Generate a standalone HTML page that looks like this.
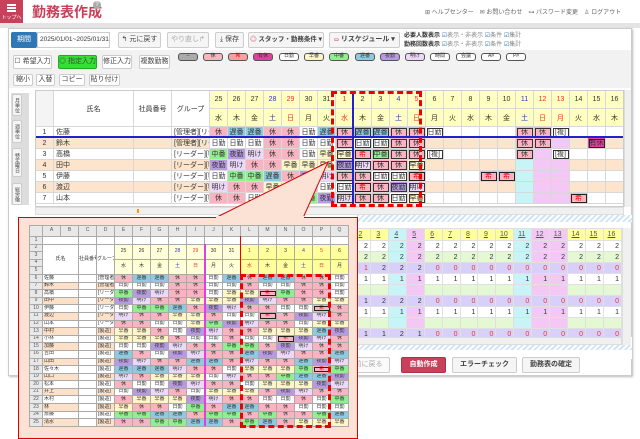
<!DOCTYPE html>
<html><head><meta charset="utf-8">
<style>
*{box-sizing:border-box;margin:0;padding:0}
body{width:640px;height:437px;overflow:hidden;background:#fff;font-family:"Liberation Sans","Noto Sans CJK JP",sans-serif;position:relative;color:#333}
.a{position:absolute}
.btn{position:absolute;border:1px solid #ccc;border-radius:2px;background:#f5f5f5;font-size:7px;text-align:center;color:#444;white-space:nowrap;overflow:hidden}
.chip{position:absolute;top:53px;width:20px;height:8px;border:1.5px solid #555;border-radius:3px;font-size:5px;text-align:center;line-height:5px}
table{border-collapse:collapse;table-layout:fixed}
#ug{left:35px;top:90px;font-size:7px;width:588px}
#ug td,#ug th{border:1px solid #d8d8d8;text-align:center;overflow:hidden;white-space:nowrap;font-weight:normal}
#ug tr.d td{height:11px;line-height:9px}
#ug tr.p td{background:#fde4cc}
#ug td.l{text-align:left;padding-left:2px}
.k{background:#f8b4c0!important}.o{background:#8ecbe0!important}.n{background:#fff!important}.c{background:#8ef08e!important}.y{background:#b89ae0!important}.q{background:#ecd8f8!important}.h{background:#fff6c8!important}.w{background:#f8b4c0!important;color:#e00;outline:1px solid #222;outline-offset:-2px}
.cs{background:#c8f4f8!important}.cp{background:#f4c8f4!important}
.bx{outline:1px solid #333;outline-offset:-2px}
.fu{background:#e040a0!important;outline:1px solid #222;outline-offset:-2px}
#ex{left:29px;top:225px;font-size:5px;background:#fff;width:319px}
#ex td,#ex th{border:1px solid #aaa;text-align:center;overflow:hidden;white-space:nowrap;height:7.6px;line-height:5.5px;font-weight:normal;padding:0}
#ex th{background:#e8e8e8;color:#555}
#ex tr.h0 th{height:11px}
#ex td.m{text-align:left;padding-left:1px}
#ex tr.p td.m{background:#fde0c8}
.yl{background:#ffff9c}.yp{background:#ffffd8}
#lg{left:352px;top:228px;font-size:7px;width:270px}
#lg td{height:11px;border:1px solid #e0e0e0;text-align:right;padding-right:2px;line-height:9px}
#lg tr.hd td{height:12px;background:#ffff9c;text-align:center;text-decoration:underline;color:#555}
.gr{background:#e4f8d4}.pu{background:#d8d0f8}
.r{color:#e33}.b{color:#33c}
</style></head><body>
<div class="a" style="left:0;top:0;width:23px;height:23px;background:#c8405a;color:#fff;font-size:5px;text-align:center">
<div style="margin:4px auto 0;width:9px;height:2px;background:#fff;box-shadow:0 3px #fff,0 6px #fff"></div>
<div style="margin-top:8px">トップへ</div></div>
<div class="a" style="left:32px;top:2px;font-size:14px;font-weight:bold;color:#c8405a">勤務表作成</div>
<div class="a" style="left:93px;top:1px;width:8px;height:8px;border-radius:50%;background:#aaa;color:#fff;font-size:6px;text-align:center;line-height:8px">?</div>
<div class="a" style="left:425px;top:7px;font-size:6px;color:#666;white-space:nowrap">⊞ ヘルプセンター　✉ お問い合わせ　⊶ パスワード変更　♙ ログアウト</div>
<div class="a" style="left:0;top:23px;width:640px;height:5px;background:#e4e4e4"></div>
<div class="a" style="left:8px;top:28px;width:624px;height:348px;border:1px solid #ccc;background:#fff;box-shadow:1px 1px 2px #bbb"></div>
<div class="a" style="left:9px;top:50px;width:622px;height:38px;background:#f2f2f2"></div>
<div class="btn" style="left:11px;top:32px;width:26px;height:16px;background:#2f78b8;color:#fff;line-height:14px;border-color:#2f78b8">期間</div>
<div class="a" style="left:37px;top:32px;width:73px;height:16px;border:1px solid #ccc;font-size:6.5px;line-height:14px;padding-left:2px;white-space:nowrap">2025/01/01~2025/01/31</div>
<div class="btn" style="left:118px;top:32px;width:43px;height:16px;line-height:14px">↰ 元に戻す</div>
<div class="btn" style="left:167px;top:32px;width:42px;height:16px;line-height:14px;color:#aaa">やり直し↱</div>
<div class="btn" style="left:215px;top:32px;width:29px;height:16px;line-height:14px">⤓ 保存</div>
<div class="btn" style="left:248px;top:32px;width:76px;height:16px;line-height:14px;font-weight:bold;font-size:6.5px"><span style="color:#c8405a">◎</span> スタッフ・勤務条件 ▾</div>
<div class="btn" style="left:329px;top:32px;width:71px;height:16px;line-height:14px;font-weight:bold"><span style="color:#c8405a;font-size:5px">▭</span> リスケジュール ▾</div>
<div class="a" style="left:404px;top:32px;font-size:6px;line-height:9px;white-space:nowrap"><b>必要人数表示</b> <span style="color:#2f78b8">☑</span><span style="color:#888">表示・非表示</span> <span style="color:#2f78b8">☑</span><span style="color:#888">条件</span> <span style="color:#2f78b8">☑</span><span style="color:#888">集計</span><br><b>勤務回数表示</b> <span style="color:#2f78b8">☑</span><span style="color:#888">表示・非表示</span> <span style="color:#2f78b8">☑</span><span style="color:#888">条件</span> <span style="color:#2f78b8">☑</span><span style="color:#888">集計</span></div>
<div class="btn" style="left:13px;top:55px;width:39px;height:14px;line-height:12px;background:#fff">☐ 希望入力</div>
<div class="btn" style="left:58px;top:55px;width:39px;height:14px;line-height:12px;background:#33e033;border-color:#2a2">◎ 指定入力</div>
<div class="btn" style="left:102px;top:55px;width:30px;height:14px;line-height:12px;background:#fff">修正入力</div>
<div class="btn" style="left:139px;top:55px;width:31px;height:14px;line-height:12px;background:#fff">複数勤務</div>
<div class="chip" style="left:178px;background:#aaa">--</div>
<div class="chip" style="left:203px;background:#f8b4c0">休</div>
<div class="chip" style="left:228px;background:#f8a0a0;color:#e00">希</div>
<div class="chip" style="left:253px;background:#e040a0">有休</div>
<div class="chip" style="left:279px;background:#fff">日勤</div>
<div class="chip" style="left:304px;background:#fff6c8">早番</div>
<div class="chip" style="left:329px;background:#8ef08e">中番</div>
<div class="chip" style="left:355px;background:#8ecbe0">遅番</div>
<div class="chip" style="left:380px;background:#b89ae0">夜勤</div>
<div class="chip" style="left:405px;background:#ecd8f8">明け</div>
<div class="chip" style="left:430px;background:#fff">時間</div>
<div class="chip" style="left:456px;background:#fff">会議</div>
<div class="chip" style="left:481px;background:#fff">A#</div>
<div class="chip" style="left:506px;background:#fff">P#</div>
<div class="btn" style="left:13px;top:74px;width:20px;height:12px;line-height:10px;background:#fff">縮小</div>
<div class="btn" style="left:36px;top:74px;width:19px;height:12px;line-height:10px;background:#fff">入替</div>
<div class="btn" style="left:59px;top:74px;width:26px;height:12px;line-height:10px;background:#fff">コピー</div>
<div class="btn" style="left:89px;top:74px;width:31px;height:12px;line-height:10px;background:#fff">貼り付け</div>
<div class="a" style="left:11px;top:93px;width:18px;height:112px;background:#ddd"></div>
<div class="btn" style="left:12px;top:94px;width:10px;height:22px;font-size:5px;writing-mode:vertical-rl;line-height:8px">月単位</div>
<div class="btn" style="left:12px;top:120px;width:10px;height:23px;font-size:5px;writing-mode:vertical-rl;line-height:8px">週単位</div>
<div class="btn" style="left:12px;top:148px;width:10px;height:29px;font-size:5px;writing-mode:vertical-rl;line-height:8px">特定曜日</div>
<div class="btn" style="left:12px;top:183px;width:10px;height:22px;font-size:5px;writing-mode:vertical-rl;line-height:8px">総労働</div>
<div class="a" style="left:35px;top:90px;width:589px;height:117px;overflow:hidden;border:1px solid #ccc">
<table id="ug" class="a" style="left:-1px;top:-1px">
<colgroup><col style="width:18px"><col style="width:80px"><col style="width:38px"><col style="width:38px"><col span="23" style="width:18px"></colgroup>
<tr style="height:18px;background:#ffffc0"><td rowspan="2" style="background:#f4f4f4"></td><td rowspan="2" style="background:#fff">氏名</td><td rowspan="2" style="background:#fff">社員番号</td><td rowspan="2" style="background:#fff">グループ</td><td>25</td><td>26</td><td>27</td><td class="b">28</td><td class="r">29</td><td>30</td><td>31</td><td class="r">1</td><td>2</td><td>3</td><td class="b">4</td><td class="r">5</td><td>6</td><td>7</td><td>8</td><td>9</td><td>10</td><td class="b">11</td><td class="r">12</td><td class="r">13</td><td>14</td><td>15</td><td>16</td></tr>
<tr style="height:18px;background:#ffffc0"><td>水</td><td>木</td><td>金</td><td class="b">土</td><td class="r">日</td><td>月</td><td>火</td><td class="r">水</td><td>木</td><td>金</td><td class="b">土</td><td class="r">日</td><td>月</td><td>火</td><td>水</td><td>木</td><td>金</td><td class="b">土</td><td class="r">日</td><td class="r">月</td><td>火</td><td>水</td><td>木</td></tr>
<tr class="d"><td>1</td><td class="l">佐藤</td><td></td><td class="l">[管理者][リーダ</td><td class="k">休</td><td class="o">遅番</td><td class="o">遅番</td><td class="k">休</td><td class="k">休</td><td class="n">日勤</td><td class="o">遅番</td><td class="k bx">休</td><td class="o bx">遅番</td><td class="o bx">遅番</td><td class="k bx">休</td><td class="k bx">休</td><td class="bx">日勤</td><td></td><td></td><td></td><td></td><td class="k bx">休</td><td class="k bx">休</td><td class="bx">[複]</td><td></td><td></td><td></td></tr>
<tr class="d p"><td>2</td><td class="l">鈴木</td><td></td><td class="l">[管理者][リーダ</td><td class="n">日勤</td><td class="n">日勤</td><td class="n">日勤</td><td class="k">休</td><td class="k">休</td><td class="n">日勤</td><td class="n">日勤</td><td class="k bx">休</td><td class="n bx">日勤</td><td class="n bx">日勤</td><td class="k bx">休</td><td class="k bx">休</td><td></td><td></td><td></td><td></td><td></td><td class="k bx">休</td><td class="k bx">休</td><td class="cp"></td><td></td><td class="fu">有休</td><td></td></tr>
<tr class="d"><td>3</td><td class="l">高橋</td><td></td><td class="l">[リーダー][製造</td><td class="c">中番</td><td class="y">夜勤</td><td class="q">明け</td><td class="k">休</td><td class="k">休</td><td class="n">日勤</td><td class="h">早番</td><td class="h bx">早番</td><td class="w">希</td><td class="c bx">中番</td><td class="k bx">休</td><td class="k bx">休</td><td class="bx">[複]</td><td></td><td></td><td></td><td></td><td class="k bx">休</td><td class="cp"></td><td class="bx">[複]</td><td></td><td></td><td></td></tr>
<tr class="d p"><td>4</td><td class="l">田中</td><td></td><td class="l">[リーダー][製造</td><td class="y">夜勤</td><td class="q">明け</td><td class="k">休</td><td class="k">休</td><td class="h">早番</td><td class="h">早番</td><td class="h">早番</td><td class="y bx">夜勤</td><td class="q bx">明け</td><td class="k bx">休</td><td class="k bx">休</td><td class="h bx">早番</td><td></td><td></td><td></td><td></td><td></td><td class="cs"></td><td class="cp"></td><td class="cp"></td><td></td><td></td><td></td></tr>
<tr class="d"><td>5</td><td class="l">伊藤</td><td></td><td class="l">[リーダー][製造</td><td class="n">日勤</td><td class="c">中番</td><td class="c">中番</td><td class="o">遅番</td><td class="k">休</td><td class="y">夜勤</td><td class="q">明け</td><td class="k bx">休</td><td class="k bx">休</td><td class="n bx">日勤</td><td class="n bx">日勤</td><td class="w">希</td><td></td><td></td><td></td><td class="w">希</td><td class="w">希</td><td class="cs"></td><td class="cp"></td><td class="cp"></td><td></td><td></td><td></td></tr>
<tr class="d p"><td>6</td><td class="l">渡辺</td><td></td><td class="l">[リーダー][製造</td><td class="q">明け</td><td class="k">休</td><td class="k">休</td><td class="h">早番</td><td class="h">早番</td><td class="k">休</td><td class="n">日勤</td><td class="n bx">日勤</td><td class="w">希</td><td class="k bx">休</td><td class="y bx">夜勤</td><td class="q bx">明け</td><td></td><td></td><td></td><td></td><td></td><td class="cs"></td><td class="cp"></td><td class="cp"></td><td></td><td></td><td></td></tr>
<tr class="d"><td>7</td><td class="l">山本</td><td></td><td class="l">[リーダー][製造</td><td class="k">休</td><td class="k">休</td><td class="n">日勤</td><td class="n">日勤</td><td class="h">早番</td><td class="c">中番</td><td class="y">夜勤</td><td class="q bx">明け</td><td class="k bx">休</td><td class="k bx">休</td><td class="n bx">日勤</td><td class="h bx">早番</td><td></td><td></td><td></td><td></td><td></td><td class="cs"></td><td class="cp"></td><td class="cp"></td><td class="w">希</td><td></td><td></td></tr>
</table>
<div class="a" style="left:0;top:45px;width:589px;height:1.5px;background:#22c"></div>
<div class="a" style="left:316px;top:0;width:1.5px;height:117px;background:#22c"></div>
</div>
<div class="a" style="left:331px;top:91px;width:91px;height:116px;border:3px dashed #e00"></div>
<div class="a" style="left:624px;top:90px;width:7px;height:117px;background:#f0f0f0;border-left:1px solid #ddd"></div>
<div class="a" style="left:35px;top:207px;width:589px;height:8px;background:#f0f0f0;border:1px solid #ddd"></div>
<div class="a" style="left:137px;top:209px;width:2px;height:4px;background:#f90"></div>
<div class="a" style="left:357px;top:215px;width:275px;height:7px;background:repeating-linear-gradient(135deg,#cfe4f6 0 2px,#fff 2px 4px)"></div>
<table id="lg" class="a">
<tr class="hd"><td>2</td><td>3</td><td class="b" style="background:#c8f4f8">4</td><td class="r" style="background:#f4c8f4">5</td><td>6</td><td>7</td><td>8</td><td>9</td><td>10</td><td class="b" style="background:#c8f4f8">11</td><td class="r" style="background:#f4c8f4">12</td><td class="r" style="background:#f4c8f4">13</td><td>14</td><td>15</td><td>16</td></tr>
<tr><td>2</td><td>2</td><td class="cs">2</td><td class="cp">2</td><td>2</td><td>2</td><td>2</td><td>2</td><td>2</td><td class="cs">2</td><td class="cp">2</td><td class="cp">2</td><td>2</td><td>2</td><td>2</td></tr>
<tr class="gr"><td>2</td><td>2</td><td class="cs">2</td><td class="cp">2</td><td>2</td><td>2</td><td>2</td><td>2</td><td>2</td><td class="cs">2</td><td class="cp">2</td><td class="cp">2</td><td>2</td><td>2</td><td>2</td></tr>
<tr class="pu"><td class="r">1</td><td>2</td><td>2</td><td>2</td><td class="r">0</td><td class="r">0</td><td class="r">0</td><td class="r">0</td><td class="r">0</td><td class="r">0</td><td class="r">0</td><td class="r">0</td><td class="r">0</td><td class="r">0</td><td class="r">0</td></tr>
<tr><td>1</td><td>1</td><td class="cs">1</td><td class="cp">1</td><td>1</td><td>1</td><td>1</td><td>1</td><td>1</td><td class="cs">1</td><td class="cp">1</td><td class="cp">1</td><td>1</td><td>1</td><td>1</td></tr>
<tr class="gr"><td></td><td></td><td class="cs"></td><td class="cp"></td><td></td><td></td><td></td><td></td><td></td><td class="cs"></td><td class="cp"></td><td class="cp"></td><td></td><td></td><td></td></tr>
<tr class="pu"><td>1</td><td>2</td><td>2</td><td>2</td><td class="r">0</td><td class="r">0</td><td class="r">0</td><td class="r">0</td><td class="r">0</td><td class="r">0</td><td class="r">0</td><td class="r">0</td><td class="r">0</td><td class="r">0</td><td class="r">0</td></tr>
<tr><td>1</td><td>1</td><td class="cs">1</td><td class="cp">1</td><td>1</td><td>1</td><td>1</td><td>1</td><td>1</td><td class="cs">1</td><td class="cp">1</td><td class="cp">1</td><td>1</td><td>1</td><td>1</td></tr>
<tr class="gr"><td></td><td></td><td class="cs"></td><td class="cp"></td><td></td><td></td><td></td><td></td><td></td><td class="cs"></td><td class="cp"></td><td class="cp"></td><td></td><td></td><td></td></tr>
<tr class="pu"><td>1</td><td>1</td><td>2</td><td>1</td><td class="r">0</td><td class="r">0</td><td class="r">0</td><td class="r">0</td><td class="r">0</td><td class="r">0</td><td class="r">0</td><td class="r">0</td><td class="r">0</td><td class="r">0</td><td class="r">0</td></tr>
</table>
<div class="a" style="left:340px;top:337px;width:292px;height:22px;background:#fff"></div>
<div class="a" style="left:357px;top:337px;width:265px;height:8px;background:#f0f0f0;border:1px solid #ddd"></div>
<div class="a" style="left:622px;top:228px;width:9px;height:117px;background:#f0f0f0;border-left:1px solid #ddd"></div>
<div class="a" style="left:357px;top:345px;width:275px;height:5px;background:repeating-linear-gradient(135deg,#cfe4f6 0 2px,#fff 2px 4px)"></div>
<div class="btn" style="left:340px;top:357px;width:50px;height:16px;line-height:14px;color:#aaa;background:#fafafa">直前に戻る</div>
<div class="btn" style="left:401px;top:357px;width:45px;height:16px;line-height:14px;background:#c8405a;color:#fff;border-color:#b03048;font-weight:bold">自動作成</div>
<div class="btn" style="left:452px;top:357px;width:65px;height:16px;line-height:14px;font-weight:bold">エラーチェック</div>
<div class="btn" style="left:522px;top:357px;width:58px;height:16px;line-height:14px;font-weight:bold">勤務表の確定</div>
<svg class="a" style="left:0;top:0" width="640" height="437"><polygon points="215,218 303,218 328,162" fill="#fbe2d4" stroke="#d00" stroke-width="1"/></svg>
<div class="a" style="left:18px;top:217px;width:340px;height:222px;background:#fbe2d4;border:1.5px solid #d00"></div>
<div class="a" style="left:216px;top:216px;width:88px;height:3px;background:#fbe2d4"></div>
<table id="ex" class="a">
<colgroup><col style="width:13px"><col span="17" style="width:18px"></colgroup>
<tr class="h0"><th></th><th>A</th><th>B</th><th>C</th><th>D</th><th>E</th><th>F</th><th>G</th><th>H</th><th>I</th><th>J</th><th>K</th><th>L</th><th>M</th><th>N</th><th>O</th><th>P</th><th>Q</th></tr>
<tr><th>1</th><td colspan="2"></td><td></td><td></td><td></td><td></td><td></td><td></td><td></td><td></td><td></td><td></td><td></td><td></td><td></td><td></td><td></td></tr>
<tr><th>2</th><td colspan="2" rowspan="4">氏名</td><td rowspan="4">社員番号</td><td rowspan="4">グループ</td><td rowspan="2" class="yp">25</td><td rowspan="2" class="yp">26</td><td rowspan="2" class="yp">27</td><td rowspan="2" class="yp b">28</td><td rowspan="2" class="yp r">29</td><td rowspan="2" class="yp">30</td><td rowspan="2" class="yp">31</td><td rowspan="2" class="yl r">1</td><td rowspan="2" class="yl">2</td><td rowspan="2" class="yl">3</td><td rowspan="2" class="yl b">4</td><td rowspan="2" class="yl r">5</td><td rowspan="2" class="yl">6</td></tr>
<tr><th>3</th></tr>
<tr><th>4</th><td rowspan="2" class="yp">水</td><td rowspan="2" class="yp">木</td><td rowspan="2" class="yp">金</td><td rowspan="2" class="yp b">土</td><td rowspan="2" class="yp r">日</td><td rowspan="2" class="yp">月</td><td rowspan="2" class="yp">火</td><td rowspan="2" class="yl r">水</td><td rowspan="2" class="yl">木</td><td rowspan="2" class="yl">金</td><td rowspan="2" class="yl b">土</td><td rowspan="2" class="yl r">日</td><td rowspan="2" class="yl">月</td></tr>
<tr><th>5</th></tr>
<tr><th>6</th><td colspan="2" class="m">佐藤</td><td></td><td class="m">[管理者</td><td class="k">休</td><td class="o">遅番</td><td class="o">遅番</td><td class="k">休</td><td class="k">休</td><td class="n">日勤</td><td class="o">遅番</td><td class="k">休</td><td class="o">遅番</td><td class="o">遅番</td><td class="k">休</td><td class="k">休</td><td class="n">日勤</td></tr>
<tr class="p"><th>7</th><td colspan="2" class="m">鈴木</td><td></td><td class="m">[管理者</td><td class="n">日勤</td><td class="n">日勤</td><td class="n">日勤</td><td class="k">休</td><td class="k">休</td><td class="n">日勤</td><td class="n">日勤</td><td class="k">休</td><td class="n">日勤</td><td class="n">日勤</td><td class="k">休</td><td class="k">休</td><td class="n">日勤</td></tr>
<tr><th>8</th><td colspan="2" class="m">高橋</td><td></td><td class="m">[リーダー</td><td class="c">中番</td><td class="y">夜勤</td><td class="q">明け</td><td class="k">休</td><td class="k">休</td><td class="n">日勤</td><td class="h">早番</td><td class="h">早番</td><td class="w">希</td><td class="c">中番</td><td class="k">休</td><td class="k">休</td><td class="n">日勤</td></tr>
<tr class="p"><th>9</th><td colspan="2" class="m">田中</td><td></td><td class="m">[リーダー</td><td class="y">夜勤</td><td class="q">明け</td><td class="k">休</td><td class="k">休</td><td class="h">早番</td><td class="h">早番</td><td class="h">早番</td><td class="y">夜勤</td><td class="q">明け</td><td class="k">休</td><td class="k">休</td><td class="h">早番</td><td class="h">早番</td></tr>
<tr><th>10</th><td colspan="2" class="m">伊藤</td><td></td><td class="m">[リーダー</td><td class="n">日勤</td><td class="c">中番</td><td class="c">中番</td><td class="o">遅番</td><td class="k">休</td><td class="y">夜勤</td><td class="q">明け</td><td class="k">休</td><td class="k">休</td><td class="n">日勤</td><td class="n">日勤</td><td class="w">希</td><td class="k">休</td></tr>
<tr class="p"><th>11</th><td colspan="2" class="m">渡辺</td><td></td><td class="m">[リーダー</td><td class="q">明け</td><td class="k">休</td><td class="k">休</td><td class="h">早番</td><td class="h">早番</td><td class="k">休</td><td class="n">日勤</td><td class="n">日勤</td><td class="w">希</td><td class="k">休</td><td class="y">夜勤</td><td class="q">明け</td><td class="k">休</td></tr>
<tr><th>12</th><td colspan="2" class="m">山本</td><td></td><td class="m">[リーダー</td><td class="k">休</td><td class="k">休</td><td class="n">日勤</td><td class="n">日勤</td><td class="h">早番</td><td class="c">中番</td><td class="y">夜勤</td><td class="q">明け</td><td class="k">休</td><td class="k">休</td><td class="n">日勤</td><td class="h">早番</td><td class="h">早番</td></tr>
<tr class="p"><th>13</th><td colspan="2" class="m">中村</td><td></td><td class="m">[製造]</td><td class="h">早番</td><td class="h">早番</td><td class="k">休</td><td class="n">日勤</td><td class="y">夜勤</td><td class="q">明け</td><td class="k">休</td><td class="k">休</td><td class="h">早番</td><td class="h">早番</td><td class="h">早番</td><td class="o">遅番</td><td class="y">夜勤</td></tr>
<tr><th>14</th><td colspan="2" class="m">小林</td><td></td><td class="m">[製造]</td><td class="h">早番</td><td class="h">早番</td><td class="h">早番</td><td class="k">休</td><td class="n">日勤</td><td class="n">日勤</td><td class="k">休</td><td class="n">日勤</td><td class="n">日勤</td><td class="w">希</td><td class="y">夜勤</td><td class="q">明け</td><td class="k">休</td></tr>
<tr class="p"><th>15</th><td colspan="2" class="m">加藤</td><td></td><td class="m">[製造]</td><td class="n">日勤</td><td class="n">日勤</td><td class="y">夜勤</td><td class="q">明け</td><td class="k">休</td><td class="k">休</td><td class="c">中番</td><td class="c">中番</td><td class="k">休</td><td class="y">夜勤</td><td class="q">明け</td><td class="k">休</td><td class="k">休</td></tr>
<tr><th>16</th><td colspan="2" class="m">吉田</td><td></td><td class="m">[製造]</td><td class="o">遅番</td><td class="k">休</td><td class="n">日勤</td><td class="y">夜勤</td><td class="q">明け</td><td class="k">休</td><td class="k">休</td><td class="o">遅番</td><td class="y">夜勤</td><td class="q">明け</td><td class="k">休</td><td class="k">休</td><td class="o">遅番</td></tr>
<tr class="p"><th>17</th><td colspan="2" class="m">山田</td><td></td><td class="m">[製造]</td><td class="y">夜勤</td><td class="q">明け</td><td class="k">休</td><td class="k">休</td><td class="o">遅番</td><td class="o">遅番</td><td class="k">休</td><td class="q">明け</td><td class="k">休</td><td class="k">休</td><td class="o">遅番</td><td class="y">夜勤</td><td class="q">明け</td></tr>
<tr><th>18</th><td colspan="2" class="m">佐々木</td><td></td><td class="m">[製造]</td><td class="o">遅番</td><td class="o">遅番</td><td class="o">遅番</td><td class="q">明け</td><td class="k">休</td><td class="k">休</td><td class="n">日勤</td><td class="h">早番</td><td class="h">早番</td><td class="h">早番</td><td class="c">中番</td><td class="w">希</td><td class="c">中番</td></tr>
<tr class="p"><th>19</th><td colspan="2" class="m">山口</td><td></td><td class="m">[製造]</td><td class="q">明け</td><td class="k">休</td><td class="h">早番</td><td class="h">早番</td><td class="h">早番</td><td class="n">日勤</td><td class="q">明け</td><td class="k">休</td><td class="k">休</td><td class="c">中番</td><td class="o">遅番</td><td class="o">遅番</td><td class="y">夜勤</td></tr>
<tr><th>20</th><td colspan="2" class="m">松本</td><td></td><td class="m">[製造]</td><td class="k">休</td><td class="n">日勤</td><td class="n">日勤</td><td class="y">夜勤</td><td class="q">明け</td><td class="k">休</td><td class="k">休</td><td class="n">日勤</td><td class="h">早番</td><td class="h">早番</td><td class="h">早番</td><td class="y">夜勤</td><td class="q">明け</td></tr>
<tr class="p"><th>21</th><td colspan="2" class="m">井上</td><td></td><td class="m">[製造]</td><td class="n">日勤</td><td class="y">夜勤</td><td class="q">明け</td><td class="k">休</td><td class="n">日勤</td><td class="h">早番</td><td class="h">早番</td><td class="h">早番</td><td class="k">休</td><td class="y">夜勤</td><td class="q">明け</td><td class="k">休</td><td class="k">休</td></tr>
<tr><th>22</th><td colspan="2" class="m">木村</td><td></td><td class="m">[製造]</td><td class="k">休</td><td class="h">早番</td><td class="h">早番</td><td class="h">早番</td><td class="y">夜勤</td><td class="q">明け</td><td class="k">休</td><td class="k">休</td><td class="n">日勤</td><td class="n">日勤</td><td class="k">休</td><td class="n">日勤</td><td class="c">中番</td></tr>
<tr class="p"><th>23</th><td colspan="2" class="m">林</td><td></td><td class="m">[製造]</td><td class="h">早番</td><td class="k">休</td><td class="k">休</td><td class="n">日勤</td><td class="c">中番</td><td class="k">休</td><td class="o">遅番</td><td class="o">遅番</td><td class="k">休</td><td class="k">休</td><td class="n">日勤</td><td class="n">日勤</td><td class="n">日勤</td></tr>
<tr><th>24</th><td colspan="2" class="m">斎藤</td><td></td><td class="m">[製造]</td><td class="c">中番</td><td class="c">中番</td><td class="o">遅番</td><td class="o">遅番</td><td class="k">休</td><td class="c">中番</td><td class="c">中番</td><td class="k">休</td><td class="c">中番</td><td class="k">休</td><td class="k">休</td><td class="c">中番</td><td class="o">遅番</td></tr>
<tr class="p"><th>25</th><td colspan="2" class="m">清水</td><td></td><td class="m">[製造]</td><td class="k">休</td><td class="k">休</td><td class="c">中番</td><td class="c">中番</td><td class="o">遅番</td><td class="o">遅番</td><td class="k">休</td><td class="c">中番</td><td class="o">遅番</td><td class="k">休</td><td class="h">早番</td><td class="h">早番</td><td class="h">早番</td></tr>
</table>
<div class="a" style="left:204px;top:244px;width:1.5px;height:182px;background:#e040e0"></div>
<div class="a" style="left:240px;top:236px;width:1px;height:38px;background:#e00"></div>
<div class="a" style="left:240px;top:274px;width:91px;height:154px;border:3px dashed #e00"></div>
</body></html>
